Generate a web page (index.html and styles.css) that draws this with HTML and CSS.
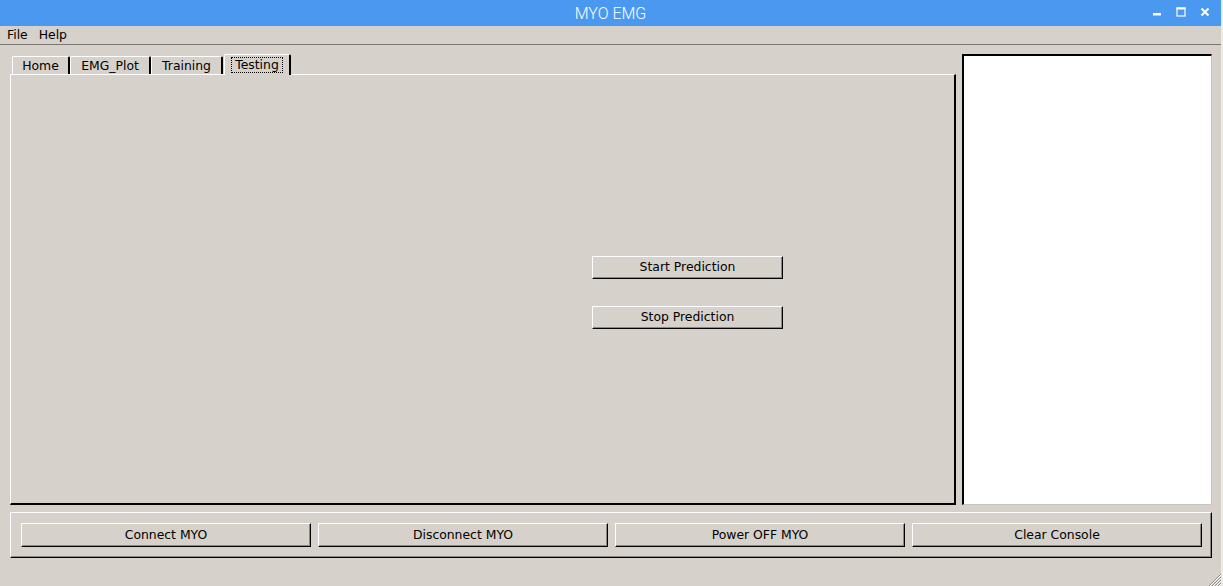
FILE: index.html
```html
<!DOCTYPE html>
<html>
<head>
<meta charset="utf-8">
<link rel="stylesheet" href="styles.css">
</head>
<body>
<div class="window">
  <div class="titlebar">
    <span class="title">MYO EMG</span>
    <div class="controls">
      <svg class="ctl" width="12" height="12" viewBox="0 0 12 12"><rect x="2" y="7" width="8" height="2.5" fill="#fff"/></svg>
      <svg class="ctl" width="12" height="12" viewBox="0 0 12 12"><rect x="2" y="2" width="8" height="8" fill="none" stroke="#fff" stroke-width="1.2"/><rect x="1.5" y="1.5" width="9" height="2" fill="#fff"/></svg>
      <svg class="ctl" width="12" height="12" viewBox="0 0 12 12"><path d="M2.5 2.5 L9.5 9.5 M9.5 2.5 L2.5 9.5" stroke="#fff" stroke-width="2"/></svg>
    </div>
  </div>
  <div class="menubar">
    <span class="menu-item">File</span>
    <span class="menu-item">Help</span>
  </div>
  <div class="content">
    <div class="top-row">
      <div class="notebook">
        <div class="tabs">
          <div class="tab tab-home">Home</div>
          <div class="tab tab-plot">EMG_Plot</div>
          <div class="tab tab-train">Training</div>
          <div class="tab tab-sel"><span class="focus">Testing</span></div>
        </div>
        <div class="pane">
          <div class="pred-buttons">
            <div class="btn pred-btn">Start Prediction</div>
            <div class="btn pred-btn">Stop Prediction</div>
          </div>
        </div>
      </div>
      <div class="console"></div>
    </div>
    <div class="bottom-frame">
      <div class="btn bottom-btn">Connect MYO</div>
      <div class="btn bottom-btn">Disconnect MYO</div>
      <div class="btn bottom-btn">Power OFF MYO</div>
      <div class="btn bottom-btn">Clear Console</div>
    </div>
  </div>
  <svg class="grip" width="14" height="14" viewBox="0 0 14 14">
    <path d="M14 2 L2 14 M14 5 L5 14 M14 8 L8 14 M14 11 L11 14" stroke="#8e8c88" stroke-width="1"/>
    <path d="M14 3 L3 14 M14 6 L6 14 M14 9 L9 14 M14 12 L12 14" stroke="#ffffff" stroke-width="1"/>
  </svg>
</div>
</body>
</html>
```
FILE: styles.css
```css
* { box-sizing: border-box; }
html, body {
  margin: 0;
  padding: 0;
  width: 1223px;
  height: 586px;
  overflow: hidden;
  background: #d6d2cb;
  font-family: "DejaVu Sans", "Liberation Sans", sans-serif;
  font-size: 12.4px;
  color: #000;
}
.window {
  position: relative;
  width: 1223px;
  height: 586px;
  border-right: 2px solid #ecebe8;
}
.titlebar {
  position: relative;
  height: 26px;
  background: #4b98f1;
  display: flex;
  align-items: center;
  justify-content: center;
}
.title {
  font-family: Roboto, "Open Sans", sans-serif;
  font-weight: 300;
  font-size: 16px;
  color: #fff;
  padding-top: 1px;
}
.controls {
  position: absolute;
  right: 10px;
  top: 6px;
  display: flex;
  gap: 12px;
}
.ctl { display: block; }
.menubar {
  height: 19px;
  display: flex;
  align-items: center;
  padding-left: 7px;
  gap: 11px;
  border-bottom: 1px solid #7a7874;
  line-height: 16px;
}
.content {
  padding: 9px 0 0 10px;
}
.top-row {
  display: flex;
  gap: 6px;
  height: 451px;
}
.notebook {
  width: 946px;
  flex-shrink: 0;
  display: flex;
  flex-direction: column;
}
.tabs {
  height: 20px;
  display: flex;
  align-items: flex-end;
  padding-left: 2px;
}
.tab {
  height: 18px;
  border-top: 1px solid #fff;
  border-left: 1px solid #fff;
  border-right: 2px solid #000;
  border-top-left-radius: 2px;
  border-top-right-radius: 2px;
  line-height: 17px;
  text-align: center;
  padding-top: 0;
}
.tab-home { width: 58px; }
.tab-plot { width: 81px; }
.tab-train { width: 72px; }
.tab-sel {
  width: 67px;
  margin-left: 1px;
  padding-top: 1px;
  border-bottom: 0;
  position: relative;
  z-index: 1;
  background: #d6d2cb;
  margin-bottom: -1px;
  height: 21px;
}
.focus {
  display: inline-block;
  border: 1px dotted #000;
  padding: 0 3px;
  line-height: 14px;
}
.pane {
  flex: 1;
  border-top: 1px solid #fff;
  border-left: 1px solid #fff;
  border-right: 2px solid #000;
  border-bottom: 2px solid #000;
  position: relative;
}
.pred-buttons {
  display: flex;
  flex-direction: column;
  gap: 27px;
  margin-left: 581px;
  margin-top: 181px;
  width: 191px;
}
.btn {
  height: 23px;
  border-top: 1px solid #fff;
  border-left: 1px solid #fff;
  border-right: 1px solid #000;
  border-bottom: 1px solid #000;
  box-shadow: inset -1px -1px 0 #8b8984;
  display: flex;
  align-items: center;
  justify-content: center;
  padding-bottom: 2px;
  background: #d6d2cb;
}
.console {
  width: 250px;
  flex-shrink: 0;
  background: #fff;
  border-top: 2px solid #000;
  border-left: 2px solid #000;
  border-right: 1px solid #c6c4c0;
  border-bottom: 1px solid #c6c4c0;
}
.bottom-frame {
  margin-top: 7px;
  width: 1202px;
  height: 46px;
  border-top: 1px solid #fff;
  border-left: 1px solid #fff;
  border-right: 1px solid #000;
  border-bottom: 1px solid #000;
  box-shadow: inset -1px -1px 0 #8b8984;
  display: flex;
  gap: 7px;
  padding: 10px 0 0 10px;
}
.bottom-btn {
  width: 290px;
  height: 24px;
}
.grip {
  position: absolute;
  right: 0;
  bottom: 0;
}
```
